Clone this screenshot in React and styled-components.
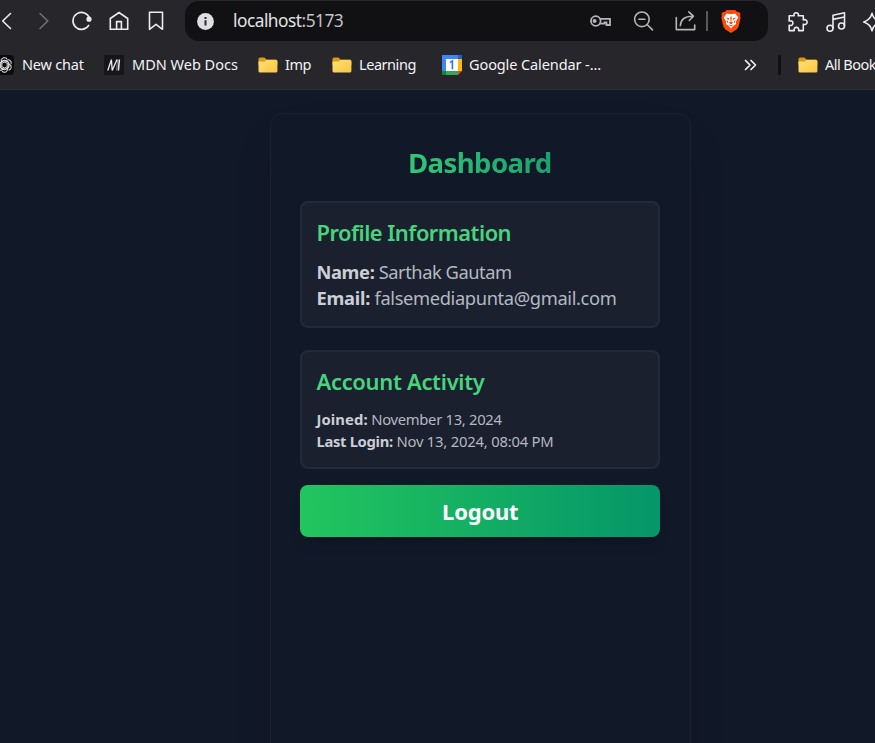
import React from "react";
import styled, { createGlobalStyle } from "styled-components";

const GlobalStyle = createGlobalStyle`
  * { box-sizing: border-box; }
  html, body { margin: 0; padding: 0; background: #111827; overflow: hidden; }
  body { font-family: "Noto Sans", "Open Sans", sans-serif; }
`;

const Screen = styled.div`
  width: 875px;
  height: 743px;
  overflow: hidden;
  display: flex;
  flex-direction: column;
  background: #111827;
`;

const Chrome = styled.header`
  height: 90px;
  flex: none;
  background: #26262b;
  border-bottom: 1px solid #303137;
  color: #f3f3f5;
`;

const Toolbar = styled.div`
  height: 42px;
  display: flex;
  align-items: center;
  overflow: hidden;
`;

const NavGroup = styled.nav`
  flex: none;
  width: 185px;
  display: flex;
  padding-right: 10px;
  justify-content: flex-end;
`;

const IconButton = styled.button`
  flex: none;
  width: ${(p) => p.$w || 37.4}px;
  height: 40px;
  padding: 0;
  border: 0;
  background: none;
  color: ${(p) => p.$color || "#ececef"};
  display: flex;
  align-items: center;
  justify-content: center;
`;

const AddressBar = styled.div`
  flex: none;
  width: 583px;
  height: 40px;
  margin-bottom: 1px;
  padding: 1px 14px 0 12px;
  border-radius: 14px;
  background: #111113;
  display: flex;
  align-items: center;
`;

const Url = styled.span`
  flex: 1;
  margin-left: 19px;
  margin-top: -1px;
  font-size: 17.3px;
  letter-spacing: ${(p) => p.$ls}px;
  color: #e3e3e6;
  i { font-style: normal; color: #c3c3c8; }
`;

const Divider = styled.span`
  width: 2px;
  height: 20px;
  background: #58585d;
`;

const ToolGroup = styled.div`
  flex: none;
  display: flex;
  padding: 1px 0 0 11px;
`;

const BookmarksBar = styled.div`
  height: 46px;
  display: flex;
  align-items: center;
  overflow: hidden;
`;

const Bookmark = styled.a`
  flex: none;
  width: ${(p) => p.$w}px;
  margin-left: ${(p) => p.$ml || 0}px;
  display: flex;
  align-items: center;
  gap: ${(p) => p.$gap || 8}px;
  font-size: 14.5px;
  line-height: 20px;
  white-space: nowrap;
  letter-spacing: ${(p) => p.$ls || 0}px;
  svg { flex: none; }
`;

const BookmarkLabel = styled.span`
  margin-top: -2px;
`;

const Overflow = styled.span`
  flex: none;
  width: 34px;
  display: flex;
`;

const BarDivider = styled.span`
  flex: none;
  width: 3px;
  height: 20px;
  margin-right: 17px;
  border-radius: 1px;
  background: #111113;
`;

const Page = styled.main`
  flex: 1;
  min-height: 0;
  display: flex;
  justify-content: center;
  align-items: flex-start;
  padding: 23px 0 0 85px;
  overflow: hidden;
`;

const Card = styled.section`
  width: 421px;
  height: 760px;
  flex: none;
  padding: 30px 29.5px 30px 29px;
  border: 1px solid #19232f;
  border-radius: 12px;
  background: #111827;
  box-shadow: 0 23px 46px -11px rgba(0, 0, 0, 0.2);
  display: flex;
  flex-direction: column;
`;

const Title = styled.h1`
  align-self: center;
  margin: 0 0 20px;
  height: 37px;
  line-height: 37px;
  font-size: 27.6px;
  font-weight: 700;
  letter-spacing: ${(p) => p.$ls}px;
  white-space: nowrap;
  color: transparent;
  background: linear-gradient(90deg, #34c678, #1aa26d);
  background-clip: text;
  -webkit-background-clip: text;
`;

const Panel = styled.section`
  flex: none;
  height: ${(p) => p.$h}px;
  margin-bottom: ${(p) => p.$mb}px;
  padding: 16px 15px 0;
  border: 2px solid #222c38;
  border-radius: 8px;
  background: #1a202e;
`;

const PanelTitle = styled.h2`
  margin: 0 0 10px;
  height: 30px;
  line-height: 27px;
  font-size: 21.9px;
  font-weight: 600;
  letter-spacing: ${(p) => p.$ls}px;
  white-space: nowrap;
  color: #47d47c;
`;

const Detail = styled.p`
  margin: 0;
  font-size: ${(p) => (p.$small ? 14.8 : 18.3)}px;
  line-height: ${(p) => (p.$small ? 22 : 26)}px;
  white-space: nowrap;
  color: #b4b8c0;
  letter-spacing: ${(p) => p.$ls}px;
  strong { font-weight: 700; color: #cbced6; letter-spacing: ${(p) => p.$bls}px; }
`;

const LogoutButton = styled.button`
  flex: none;
  height: 52px;
  padding: 0 0 1px 1px;
  border: 0;
  border-radius: 8px;
  color: #fff;
  font-family: inherit;
  font-size: 22px;
  font-weight: 700;
  letter-spacing: ${(p) => p.$ls}px;
  line-height: 50px;
  background: linear-gradient(90deg, #22c55e, #059669);
  box-shadow: 0 9px 14px -3px rgba(0, 0, 0, 0.12), 0 4px 6px -4px rgba(0, 0, 0, 0.12);
`;

const Line = ({ w = 22, h = 22, sw = 1.6, children }) => (
  <svg width={w} height={h} viewBox={`0 0 ${w} ${h}`} fill="none" stroke="currentColor" strokeWidth={sw} strokeLinecap="round" strokeLinejoin="round">
    {children}
  </svg>
);

const FolderIcon = () => (
  <svg width="20" height="18" viewBox="0 0 20 18">
    <defs>
      <linearGradient id="folder" x1="0" y1="0" x2="1" y2="1">
        <stop offset="0" stopColor="#ffe07a" />
        <stop offset="1" stopColor="#fbc63c" />
      </linearGradient>
    </defs>
    <path d="M.5 3a1.6 1.6 0 0 1 1.6-1.6h4.3L8.5 3.5h9.3A1.6 1.6 0 0 1 19.4 5v4H.5z" fill="#dc9a12" />
    <path d="M.5 5.4h6.2l1.7-1.3h9.5a1.5 1.5 0 0 1 1.5 1.5V15a1.5 1.5 0 0 1-1.5 1.5H2A1.5 1.5 0 0 1 .5 15z" fill="url(#folder)" />
  </svg>
);

const ChatIcon = () => (
  <svg width="20" height="20" viewBox="0 0 20 20">
    <rect width="20" height="20" rx="4" fill="#0c0c0d" />
    <g transform="translate(10.5 10)" fill="none" stroke="#dcdcdc" strokeWidth="1.05" strokeLinejoin="round">
      {[0, 60, 120, 180, 240, 300].map((a) => (
        <path key={a} transform={`rotate(${a})`} d="M-3 -1.8V-4.3A3 3 0 0 1 2.4 -6.1M-3 -3.2L0 -4.9L3.6 -2.9" />
      ))}
      <path d="M0-3.1L2.7-1.6V1.6L0 3.1L-2.7 1.6V-1.6z" />
    </g>
  </svg>
);

const MdnIcon = () => (
  <svg width="20" height="20" viewBox="0 0 20 20">
    <rect width="20" height="20" fill="#15151b" />
    <path d="M3.8 15.5L7.4 4.6L8.2 15.5L13 4.6" fill="none" stroke="#eee" strokeWidth="1.3" strokeLinejoin="bevel" />
    <path d="M15.4 4.5L14.4 15.5" fill="none" stroke="#eee" strokeWidth="1.5" />
    <path d="M12.6 15.5L13.6 4.5" fill="none" stroke="#eee" strokeWidth="0.5" />
  </svg>
);

const CalendarIcon = () => (
  <svg width="20" height="20" viewBox="0 0 20 20">
    <path d="M0 0h20v5H4v11H0z" fill="#4285f4" />
    <path d="M16 0h4v4h-4z" fill="#1967d2" />
    <path d="M16 4h4v12h-4z" fill="#fbbc04" />
    <path d="M0 16h16v4H0z" fill="#34a853" />
    <path d="M0 16h4v4H0z" fill="#188038" />
    <path d="M16 16h4l-4 4z" fill="#ea4335" />
    <path d="M4 4h12v12H4z" fill="#fff" />
    <path d="M8 7.4L10.4 6V14.3" fill="none" stroke="#2f73e5" strokeWidth="1.6" />
  </svg>
);

const BraveIcon = () => (
  <svg width="20" height="23" viewBox="0 0 20 23">
    <path d="M5.8 0h8.4l2 2.1 2-.2 1.4 2-.6 2 .7 1.6-2.1 9.3-2 2.6L10 23l-5.6-3.6-2-2.6L.3 7.5 1 5.9l-.6-2 1.4-2 2 .2z" fill="#ff4a0b" />
    <path d="M5.8 3.5L8 4h4l2.2-.5 3 4-2.4 4.2.3 2.3-3 2-2.1 2.4L7.9 16l-3-2 .3-2.3L2.8 7.5z" fill="#fff" />
    <path d="M4.6 7.5l3.6.8-.5 1.7zM15.4 7.5l-3.6.8.5 1.7zM10 5.3l.8 3-.5 3.2 1.9 1.2L10 14.2l-2.2-1.5 1.9-1.2-.5-3.2z" fill="#f04a17" />
    <path d="M6.2 10.5l.5 2.2M13.8 10.5l-.5 2.2M8.3 15l1.7.9 1.7-.9" fill="none" stroke="#f04a17" strokeWidth="1" />
  </svg>
);

export default function App() {
  return (
    <>
      <GlobalStyle />
      <Screen>
        <Chrome>
          <Toolbar>
            <NavGroup>
              <IconButton aria-label="Back"><Line><path d="M14.5 3.5L6.7 11l7.8 7.5" /></Line></IconButton>
              <IconButton aria-label="Forward" $color="#707075"><Line><path d="M7 3.5l7.8 7.5L7 18.5" /></Line></IconButton>
              <IconButton aria-label="Reload">
                <Line><path d="M17.7 15.4A8.5 8.5 0 1 1 18.6 8.4" /><circle cx="18" cy="9.2" r="1.8" fill="currentColor" /></Line>
              </IconButton>
              <IconButton aria-label="Home">
                <Line><path d="M2.3 8.5L11 2.5l8.7 6v10.7H2.3zM8.6 19V11.6h4.8V19" strokeLinejoin="miter" /></Line>
              </IconButton>
              <IconButton aria-label="Bookmark this page">
                <Line><path d="M4.5 2.3h13v17L11 14.4l-6.5 4.9z" /></Line>
              </IconButton>
            </NavGroup>
            <AddressBar>
              <svg width="17" height="17" viewBox="0 0 17 17">
                <circle cx="8.5" cy="8.5" r="8.4" fill="#dedee3" />
                <path d="M8.5 7.2v5.3M8.5 4v2" stroke="#2b2b30" strokeWidth="2" />
              </svg>
              <Url $ls={-0.5}>localhost<i>:5173</i></Url>
              <IconButton aria-label="Passwords" $w={42} $color="#b5b5ba">
                <Line sw={1.8}><circle cx="6.8" cy="11" r="4.8" /><circle cx="5.6" cy="11" r="1.1" fill="currentColor" /><path d="M11.3 8.8H21V15H17.5V12.4H15.4V13.6H11" strokeLinejoin="miter" /></Line>
              </IconButton>
              <IconButton aria-label="Zoom" $w={43} $color="#b5b5ba">
                <Line><circle cx="9.9" cy="9.3" r="7.3" /><path d="M15.3 14.7l5.2 5.2M6.9 9.3h6" /></Line>
              </IconButton>
              <IconButton aria-label="Share" $w={42} $color="#b5b5ba">
                <Line><path d="M2.3 7.5V19.6H20.7V15M6.3 15.8C6.7 9.5 10.5 6 19 6.2M14.8 1.8L19.4 6.2L15.3 10.5" /></Line>
              </IconButton>
              <Divider />
              <IconButton aria-label="Shields" $w={46}><BraveIcon /></IconButton>
            </AddressBar>
            <ToolGroup>
              <IconButton aria-label="Extensions" $w={38.5}>
                <Line><path d="M2.2 4.8H7.2C6.3 2.8 7.7 1.8 9.2 1.8S12 2.8 11.2 4.8H16.3V9C18.5 8 20.2 9.5 20.2 11.1S18.5 14.2 16.3 13.2V19.6H11.5C12.3 17.5 11 16.4 9.4 16.4S6.5 17.5 7.3 19.6H2.2V14.3C4.7 15 5.9 13.6 5.9 12.1S4.7 9.3 2.2 10z" /></Line>
              </IconButton>
              <IconButton aria-label="Music" $w={37}>
                <Line><circle cx="5" cy="17.2" r="3" /><circle cx="16.5" cy="15" r="3" /><path d="M8 17V4.3L19.5 1.8V15M8 8.4L19.5 6" /></Line>
              </IconButton>
              <IconButton aria-label="Assistant" $w={34}>
                <Line><path d="M11 2.2Q12.5 9 19.3 11Q12.5 13 11 19.8Q9.5 13 2.7 11Q9.5 9 11 2.2z" /></Line>
              </IconButton>
            </ToolGroup>
          </Toolbar>
          <BookmarksBar>
            <Bookmark $w={110} $ml={-6} $ls={-0.2}><ChatIcon /><BookmarkLabel>New chat</BookmarkLabel></Bookmark>
            <Bookmark $w={154} $ls={0}><MdnIcon /><BookmarkLabel>MDN Web Docs</BookmarkLabel></Bookmark>
            <Bookmark $w={74} $gap={7} $ls={-0.5}><FolderIcon /><BookmarkLabel>Imp</BookmarkLabel></Bookmark>
            <Bookmark $w={110} $gap={7} $ls={-0.45}><FolderIcon /><BookmarkLabel>Learning</BookmarkLabel></Bookmark>
            <Bookmark $w={302} $gap={7} $ls={-0.1}><CalendarIcon /><BookmarkLabel>Google Calendar -...</BookmarkLabel></Bookmark>
            <Overflow>
              <Line w={13} h={14} sw={1.7}><path d="M1.5 2.5L6 7l-4.5 4.5M7 2.5L11.5 7 7 11.5" /></Line>
            </Overflow>
            <BarDivider />
            <Bookmark $w={77} $gap={7} $ls={-0.55}><FolderIcon /><BookmarkLabel>All Book</BookmarkLabel></Bookmark>
          </BookmarksBar>
        </Chrome>
        <Page>
          <Card>
            <Title $ls={-0.6}>Dashboard</Title>
            <Panel $h={127} $mb={22}>
              <PanelTitle $ls={-0.53}>Profile Information</PanelTitle>
              <Detail $ls={-0.46} $bls={-0.35}><strong>Name:</strong> Sarthak Gautam</Detail>
              <Detail $ls={-0.36} $bls={-0.25}><strong>Email:</strong> falsemediapunta@gmail.com</Detail>
            </Panel>
            <Panel $h={119} $mb={16}>
              <PanelTitle $ls={-0.28}>Account Activity</PanelTitle>
              <Detail $small $ls={-0.31} $bls={0.1}><strong>Joined:</strong> November 13, 2024</Detail>
              <Detail $small $ls={-0.21} $bls={-0.33}><strong>Last Login:</strong> Nov 13, 2024, 08:04 PM</Detail>
            </Panel>
            <LogoutButton $ls={-0.2}>Logout</LogoutButton>
          </Card>
        </Page>
      </Screen>
    </>
  );
}
